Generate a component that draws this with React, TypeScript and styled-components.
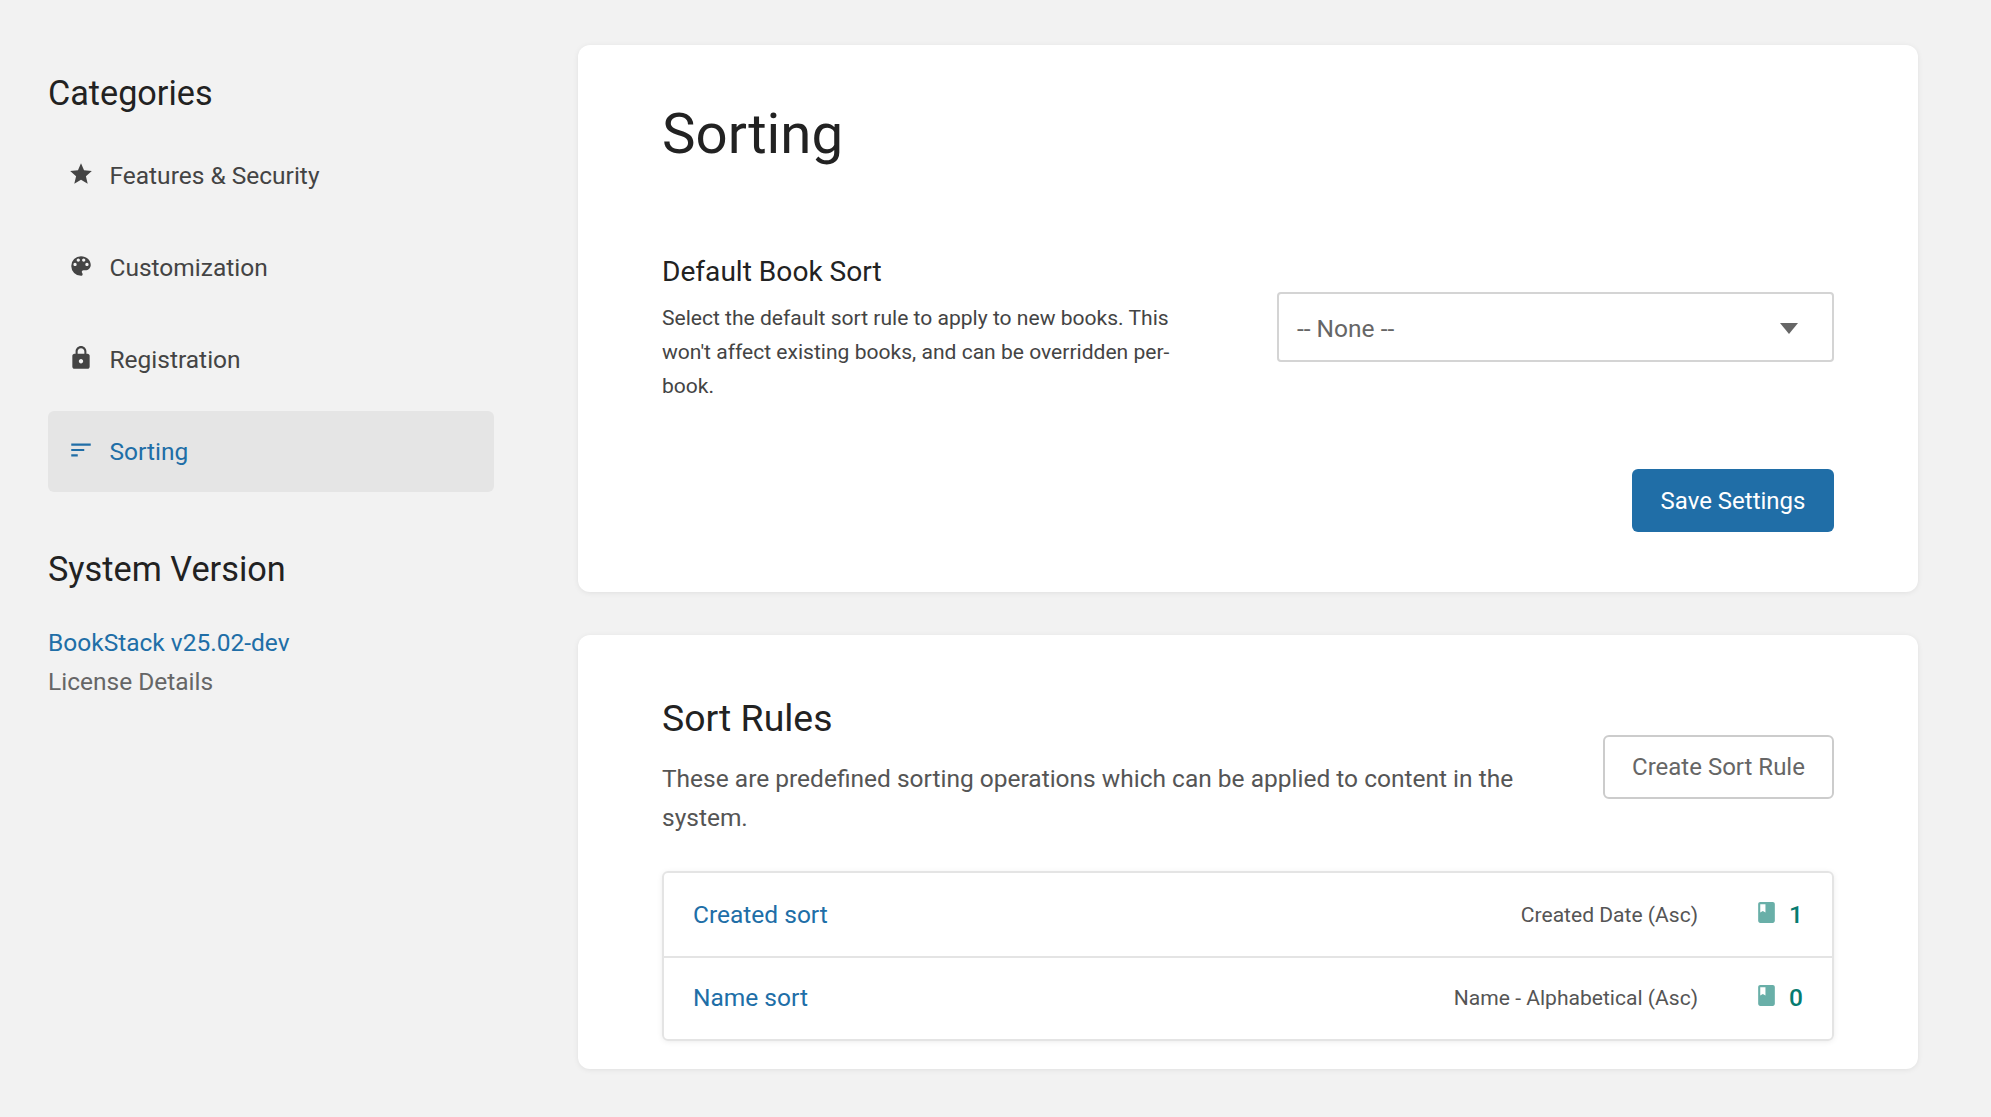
import { FC } from "react";
import styled, { createGlobalStyle } from "styled-components";

const GlobalStyle = createGlobalStyle`
  html, body {
    margin: 0;
    padding: 0;
    background: #f2f2f2;
    font-family: Roboto, "Liberation Sans", sans-serif;
    color: #444;
  }
  * {
    box-sizing: border-box;
  }
`;

const iconPaths = {
  star: "M12 17.27L18.18 21l-1.64-7.03L22 9.24l-7.19-.61L12 2 9.19 8.63 2 9.24l5.46 4.73L5.82 21z",
  palette:
    "M12 3a9 9 0 0 0 0 18c.83 0 1.5-.67 1.5-1.5 0-.39-.15-.74-.39-1.01-.23-.26-.38-.61-.38-.99 0-.83.67-1.5 1.5-1.5H16c2.76 0 5-2.24 5-5 0-4.42-4.03-8-9-8zm-5.5 9c-.83 0-1.5-.67-1.5-1.5S5.67 9 6.5 9 8 9.67 8 10.5 7.33 12 6.5 12zm3-4C8.67 8 8 7.33 8 6.5S8.67 5 9.5 5s1.5.67 1.5 1.5S10.33 8 9.5 8zm5 0c-.83 0-1.5-.67-1.5-1.5S13.67 5 14.5 5s1.5.67 1.5 1.5S15.33 8 14.5 8zm3 4c-.83 0-1.5-.67-1.5-1.5S16.67 9 17.5 9s1.5.67 1.5 1.5-.67 1.5-1.5 1.5z",
  lock: "M18 8h-1V6c0-2.76-2.24-5-5-5S7 3.24 7 6v2H6c-1.1 0-2 .9-2 2v10c0 1.1.9 2 2 2h12c1.1 0 2-.9 2-2V10c0-1.1-.9-2-2-2zm-6 9c-1.1 0-2-.9-2-2s.9-2 2-2 2 .9 2 2-.9 2-2 2zm3.1-9H8.9V6c0-1.71 1.39-3.1 3.1-3.1 1.71 0 3.1 1.39 3.1 3.1v2z",
  sort: "M3 18h6v-2H3v2zM3 6v2h18V6H3zm0 7h12v-2H3v2z",
  book: "M18 2H6c-1.1 0-2 .9-2 2v16c0 1.1.9 2 2 2h12c1.1 0 2-.9 2-2V4c0-1.1-.9-2-2-2zM6 4h5v8l-2.5-1.5L6 12V4z",
};

type IconName = keyof typeof iconPaths;

const Icon: FC<{ name: IconName; className?: string }> = ({ name, className }) => (
  <svg className={className} viewBox="0 0 24 24" fill="currentColor">
    <path d={iconPaths[name]} />
  </svg>
);

const categories: { label: string; icon: IconName; active?: boolean }[] = [
  { label: "Features & Security", icon: "star" },
  { label: "Customization", icon: "palette" },
  { label: "Registration", icon: "lock" },
  { label: "Sorting", icon: "sort", active: true },
];

const rules = [
  { name: "Created sort", operations: "Created Date (Asc)", count: 1 },
  { name: "Name sort", operations: "Name - Alphabetical (Asc)", count: 0 },
];

export default function App() {
  return (
    <>
      <GlobalStyle />
      <Page>
        <Sidebar>
          <CategoriesTitle>Categories</CategoriesTitle>
          <Nav>
            {categories.map((item) => (
              <NavItem key={item.label} $active={item.active}>
                <NavIcon name={item.icon} />
                {item.label}
              </NavItem>
            ))}
          </Nav>
          <VersionTitle>System Version</VersionTitle>
          <VersionLink>BookStack v25.02-dev</VersionLink>
          <LicenseLink>License Details</LicenseLink>
        </Sidebar>
        <Content>
          <SettingsCard>
            <PageTitle>Sorting</PageTitle>
            <SettingRow>
              <SettingText>
                <SettingLabel>Default Book Sort</SettingLabel>
                <SettingHelp>
                  Select the default sort rule to apply to new books. This won't affect existing
                  books, and can be overridden per-book.
                </SettingHelp>
              </SettingText>
              <SelectBox>
                -- None --
                <SelectArrow />
              </SelectBox>
            </SettingRow>
            <SaveRow>
              <SaveButton>Save Settings</SaveButton>
            </SaveRow>
          </SettingsCard>
          <RulesCard>
            <RulesHeader>
              <div>
                <RulesTitle>Sort Rules</RulesTitle>
                <RulesIntro>
                  These are predefined sorting operations which can be applied to content in the
                  system.
                </RulesIntro>
              </div>
              <OutlineButton>Create Sort Rule</OutlineButton>
            </RulesHeader>
            <RuleList>
              {rules.map((rule) => (
                <RuleRow key={rule.name}>
                  <RuleName>{rule.name}</RuleName>
                  <RuleOperations>{rule.operations}</RuleOperations>
                  <BookIcon name="book" />
                  <BookCount>{rule.count}</BookCount>
                </RuleRow>
              ))}
            </RuleList>
          </RulesCard>
        </Content>
      </Page>
    </>
  );
}

const Page = styled.div`
  display: grid;
  grid-template-columns: 446px 1340px;
  column-gap: 84px;
  padding: 45px 0 48px 48px;
  min-height: 1117px;
`;

const Sidebar = styled.aside`
  display: flex;
  flex-direction: column;
  align-items: flex-start;
`;

const CategoriesTitle = styled.h5`
  margin: 24px 0 0;
  font-size: 34.2px;
  line-height: 48px;
  font-weight: 400;
  color: #222;
`;

const Nav = styled.nav`
  display: flex;
  flex-direction: column;
  gap: 11px;
  width: 100%;
  margin-top: 18px;
`;

const NavItem = styled.a<{ $active?: boolean }>`
  display: flex;
  align-items: center;
  height: 81px;
  padding-left: 20px;
  border-radius: 6px;
  font-size: 24.5px;
  color: ${({ $active }) => ($active ? "#206ea7" : "#444")};
  background: ${({ $active }) => ($active ? "#e5e5e5" : "transparent")};
`;

const NavIcon = styled(Icon)`
  width: 26px;
  height: 26px;
  margin-top: -3px;
  margin-right: 15.5px;
  flex-shrink: 0;
`;

const VersionTitle = styled.h5`
  margin: 52px 0 0;
  font-size: 34.3px;
  line-height: 50px;
  font-weight: 400;
  color: #222;
`;

const VersionLink = styled.a`
  margin-top: 30px;
  font-size: 24.5px;
  line-height: 38.5px;
  color: #206ea7;
`;

const LicenseLink = styled.a`
  font-size: 24.5px;
  line-height: 38.5px;
  color: #666;
`;

const Content = styled.main`
  display: flex;
  flex-direction: column;
  gap: 43px;
`;

const Card = styled.section`
  background: #fff;
  border-radius: 12px;
  box-shadow: 0 1px 6px -1px rgba(0, 0, 0, 0.1);
  padding-left: 84px;
  padding-right: 84px;
`;

const SettingsCard = styled(Card)`
  height: 547px;
  padding-top: 48px;
`;

const PageTitle = styled.h1`
  margin: 0;
  font-size: 56.4px;
  line-height: 82px;
  font-weight: 400;
  color: #222;
`;

const SettingRow = styled.div`
  display: grid;
  grid-template-columns: 1fr 557px;
  column-gap: 72px;
  margin-top: 79px;
`;

const SettingText = styled.div``;

const SettingLabel = styled.div`
  font-size: 28.1px;
  line-height: 36px;
  font-weight: 400;
  color: #222;
`;

const SettingHelp = styled.p`
  margin: 11px 0 0;
  font-size: 21.07px;
  line-height: 34px;
  color: #444;
`;

const SelectBox = styled.div`
  position: relative;
  display: flex;
  align-items: center;
  height: 70px;
  margin-top: 38px;
  padding: 2px 0 0 18px;
  border: 2px solid #d4d4d4;
  border-radius: 4px;
  font-size: 24.5px;
  color: #666;
`;

const SelectArrow = styled.span`
  position: absolute;
  right: 34px;
  top: 29px;
  width: 0;
  height: 0;
  border-left: 9px solid transparent;
  border-right: 9px solid transparent;
  border-top: 11px solid #666;
`;

const SaveRow = styled.div`
  display: flex;
  justify-content: flex-end;
  margin-top: 66px;
`;

const SaveButton = styled.button`
  width: 202px;
  height: 63px;
  border: 0;
  border-radius: 6px;
  background: #206ea7;
  color: #fff;
  font-family: inherit;
  font-size: 24px;
`;

const RulesCard = styled(Card)`
  height: 434px;
  padding-top: 58px;
`;

const RulesHeader = styled.div`
  display: grid;
  grid-template-columns: 1fr 231px;
  column-gap: 80px;
  align-items: start;
`;

const RulesTitle = styled.h2`
  margin: -1px 0 0;
  font-size: 37.4px;
  line-height: 52px;
  font-weight: 400;
  color: #222;
`;

const RulesIntro = styled.p`
  margin: 15px 0 0;
  font-size: 24.5px;
  line-height: 39px;
  color: #555;
`;

const OutlineButton = styled.button`
  height: 64px;
  margin-top: 42px;
  border: 2px solid #ccc;
  border-radius: 6px;
  background: #fff;
  color: #666;
  font-family: inherit;
  font-size: 24px;
`;

const RuleList = styled.div`
  margin-top: 33.5px;
  border: 2px solid #e4e4e4;
  border-radius: 6px;
  box-shadow: 0 1px 6px -1px rgba(0, 0, 0, 0.1);
`;

const RuleRow = styled.div`
  display: flex;
  align-items: center;
  height: 83px;
  padding: 0 28px 0 29px;
  & + & {
    border-top: 2px solid #e4e4e4;
    padding-bottom: 2px;
  }
`;

const RuleName = styled.a`
  flex: 1;
  font-size: 24.5px;
  color: #206ea7;
`;

const RuleOperations = styled.span`
  font-size: 21.07px;
  color: #555;
`;

const BookIcon = styled(Icon)`
  width: 25px;
  height: 25px;
  margin-left: 56px;
  margin-top: -3px;
  color: #077b70;
  opacity: 0.6;
`;

const BookCount = styled.span`
  margin-left: 10px;
  min-width: 15px;
  font-size: 24.5px;
  font-weight: 500;
  color: #077b70;
`;
